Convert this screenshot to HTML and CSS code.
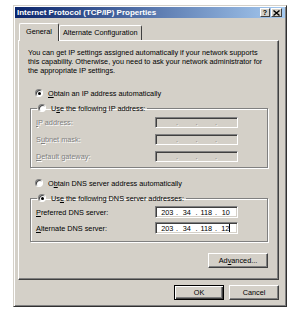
FILE: index.html
```html
<!DOCTYPE html>
<html lang="en">
<head>
    <meta charset="UTF-8">
    <title>Internet Protocol (TCP/IP) Properties</title>
    <link rel="stylesheet" href="styles.css">
</head>
<body>
    <div class="window">
        <div class="titlebar">
            <span class="title">Internet Protocol (TCP/IP) Properties</span>
            <span class="tb-btn help">?</span>
            <span class="tb-btn close">
                <svg width="7" height="6" viewBox="0 0 7 6"><path d="M0.5 0.5 L6.5 5.5 M6.5 0.5 L0.5 5.5" stroke="#000" stroke-width="1.4"/></svg>
            </span>
        </div>
        <div class="content">
            <div class="tabs">
                <div class="tab active">General</div>
                <div class="tab">Alternate Configuration</div>
            </div>
            <div class="panel">
                <p class="intro">You can get IP settings assigned automatically if your network supports<br>this capability. Otherwise, you need to ask your network administrator for<br>the appropriate IP settings.</p>

                <div class="radio"><span class="dot checked"></span><span><u>O</u>btain an IP address automatically</span></div>
                <fieldset class="group">
                    <legend class="radio"><span class="dot"></span><span>U<u>s</u>e the following IP address:</span></legend>
                    <div class="row disabled">
                        <span class="lbl"><u>I</u>P address:</span>
                        <span class="ip off"><span></span><i>.</i><span></span><i>.</i><span></span><i>.</i><span></span></span>
                    </div>
                    <div class="row disabled">
                        <span class="lbl">S<u>u</u>bnet mask:</span>
                        <span class="ip off"><span></span><i>.</i><span></span><i>.</i><span></span><i>.</i><span></span></span>
                    </div>
                    <div class="row disabled">
                        <span class="lbl"><u>D</u>efault gateway:</span>
                        <span class="ip off"><span></span><i>.</i><span></span><i>.</i><span></span><i>.</i><span></span></span>
                    </div>
                </fieldset>

                <div class="radio gap"><span class="dot"></span><span>O<u>b</u>tain DNS server address automatically</span></div>
                <fieldset class="group dns">
                    <legend class="radio"><span class="dot checked"></span><span>Us<u>e</u> the following DNS server addresses:</span></legend>
                    <div class="row">
                        <span class="lbl"><u>P</u>referred DNS server:</span>
                        <span class="ip"><span>203</span><i>.</i><span>34</span><i>.</i><span>118</span><i>.</i><span>10</span></span>
                    </div>
                    <div class="row">
                        <span class="lbl"><u>A</u>lternate DNS server:</span>
                        <span class="ip"><span>203</span><i>.</i><span>34</span><i>.</i><span>118</span><i>.</i><span class="caret">12</span></span>
                    </div>
                </fieldset>

                <div class="adv-row">
                    <button class="btn adv">Ad<u>v</u>anced...</button>
                </div>
            </div>
            <div class="footer">
                <button class="btn default">OK</button>
                <button class="btn">Cancel</button>
            </div>
        </div>
    </div>
</body>
</html>
```

FILE: styles.css
```css
body {
    margin: 0;
    padding: 5px 0 0 13px;
    background: #fff;
    font-family: "Liberation Sans", Arial, sans-serif;
    font-size: 7.3px;
    color: #000;
}
u {
    text-decoration: underline;
    text-underline-offset: 1px;
}
.window {
    box-sizing: border-box;
    width: 274px;
    height: 302px;
    padding: 1px;
    background: #d4d0c8;
    border: 1px solid;
    border-color: #d4d0c8 #303030 #303030 #d4d0c8;
    box-shadow: inset 1px 1px #fff, inset -1px -1px #808080;
}
.titlebar {
    height: 11px;
    display: flex;
    align-items: center;
    padding: 0 3px 0 2px;
    background: linear-gradient(to right, #0a246a, #a6caf0);
}
.title {
    flex: 1;
    color: #fff;
    font-weight: bold;
    font-size: 8px;
}
.tb-btn {
    box-sizing: border-box;
    width: 10px;
    height: 9px;
    display: flex;
    align-items: center;
    justify-content: center;
    background: #d4d0c8;
    border: 1px solid;
    border-color: #fff #404040 #404040 #fff;
    font-weight: bold;
    font-size: 7px;
    line-height: 1;
}
.tb-btn.close {
    width: 11px;
    margin-left: 1px;
}
.content {
    padding: 5px 6px 0 3px;
}
.tabs {
    display: flex;
    align-items: flex-end;
    height: 17px;
    padding-left: 1px;
}
.tab {
    height: 15px;
    line-height: 14px;
    padding: 0 3px;
    border: 1px solid;
    border-color: #fff #404040 transparent #fff;
    border-bottom: none;
    border-radius: 2px 2px 0 0;
    box-sizing: border-box;
}
.tab.active {
    height: 18px;
    margin-bottom: -1px;
    background: #d4d0c8;
    position: relative;
    z-index: 1;
    line-height: 16px;
    padding: 0 6px 0 6px;
}
.panel {
    box-sizing: border-box;
    height: 240px;
    border: 1px solid;
    border-color: #fff #404040 #404040 #fff;
    box-shadow: inset -1px -1px #808080;
    padding: 7px 9px 0 11px;
}
.intro {
    margin: 0 0 0 -2px;
    line-height: 9px;
    white-space: nowrap;
}
.radio {
    display: flex;
    align-items: center;
    height: 10px;
    margin: 13px 0 0 5px;
}
.radio.gap {
    margin-top: 10px;
}
.dot {
    box-sizing: border-box;
    width: 8px;
    height: 8px;
    margin-right: 5px;
    border-radius: 50%;
    background: #fff;
    border: 1px solid;
    border-color: #808080 #fff #fff #808080;
    box-shadow: inset 1px 1px #404040;
    display: flex;
    align-items: center;
    justify-content: center;
}
.dot.checked::after {
    content: "";
    width: 3px;
    height: 3px;
    border-radius: 50%;
    background: #000;
}
.group {
    margin: 5px 0 0 0;
    padding: 4px 29px 5px 5px;
    width: 238px;
    box-sizing: border-box;
    border: 1px solid #808080;
    box-shadow: inset 1px 1px #fff, 1px 1px #fff;
    min-width: 0;
}
.group legend.radio {
    margin: 0 0 0 1px;
    padding: 0 2px 0 1px;
    height: 10px;
}
.group.dns {
    padding-top: 3px;
    padding-bottom: 7px;
}
.row {
    display: flex;
    align-items: center;
    height: 11px;
}
.row + .row {
    margin-top: 6px;
}
.dns .row {
    height: 12px;
}
.dns .row + .row {
    margin-top: 4px;
}
.lbl {
    width: 119px;
}
.disabled .lbl {
    color: #808080;
    text-shadow: 1px 1px #fff;
}
.ip {
    box-sizing: border-box;
    width: 83px;
    height: 100%;
    display: flex;
    align-items: center;
    padding: 0 3px;
    background: #fff;
    border: 1px solid;
    border-color: #808080 #fff #fff #808080;
    box-shadow: inset 1px 1px #404040, inset -1px -1px #d4d0c8;
}
.ip.off {
    background: #d4d0c8;
}
.ip span {
    flex: 1;
    text-align: center;
}
.ip i {
    font-style: normal;
    width: 3px;
    text-align: center;
}
.ip.off i {
    color: #808080;
    text-shadow: 1px 1px #fff;
}
.caret::after {
    content: "";
    display: inline-block;
    width: 1px;
    height: 8px;
    background: #000;
    vertical-align: -1px;
}
.adv-row {
    display: flex;
    justify-content: flex-end;
    width: 238px;
    margin-top: 11px;
}
.btn {
    box-sizing: border-box;
    width: 50px;
    height: 15px;
    padding: 0;
    font-family: inherit;
    font-size: 7.3px;
    color: #000;
    background: #d4d0c8;
    border: 1px solid;
    border-color: #fff #404040 #404040 #fff;
    box-shadow: inset -1px -1px #808080;
}
.btn.adv {
    width: 60px;
}
.btn.default {
    border-color: #000;
    box-shadow: inset 1px 1px #fff, inset -1px -1px #404040, inset -2px -2px #808080;
}
.footer {
    display: flex;
    justify-content: flex-end;
    gap: 5px;
    margin-top: 5px;
}
```
